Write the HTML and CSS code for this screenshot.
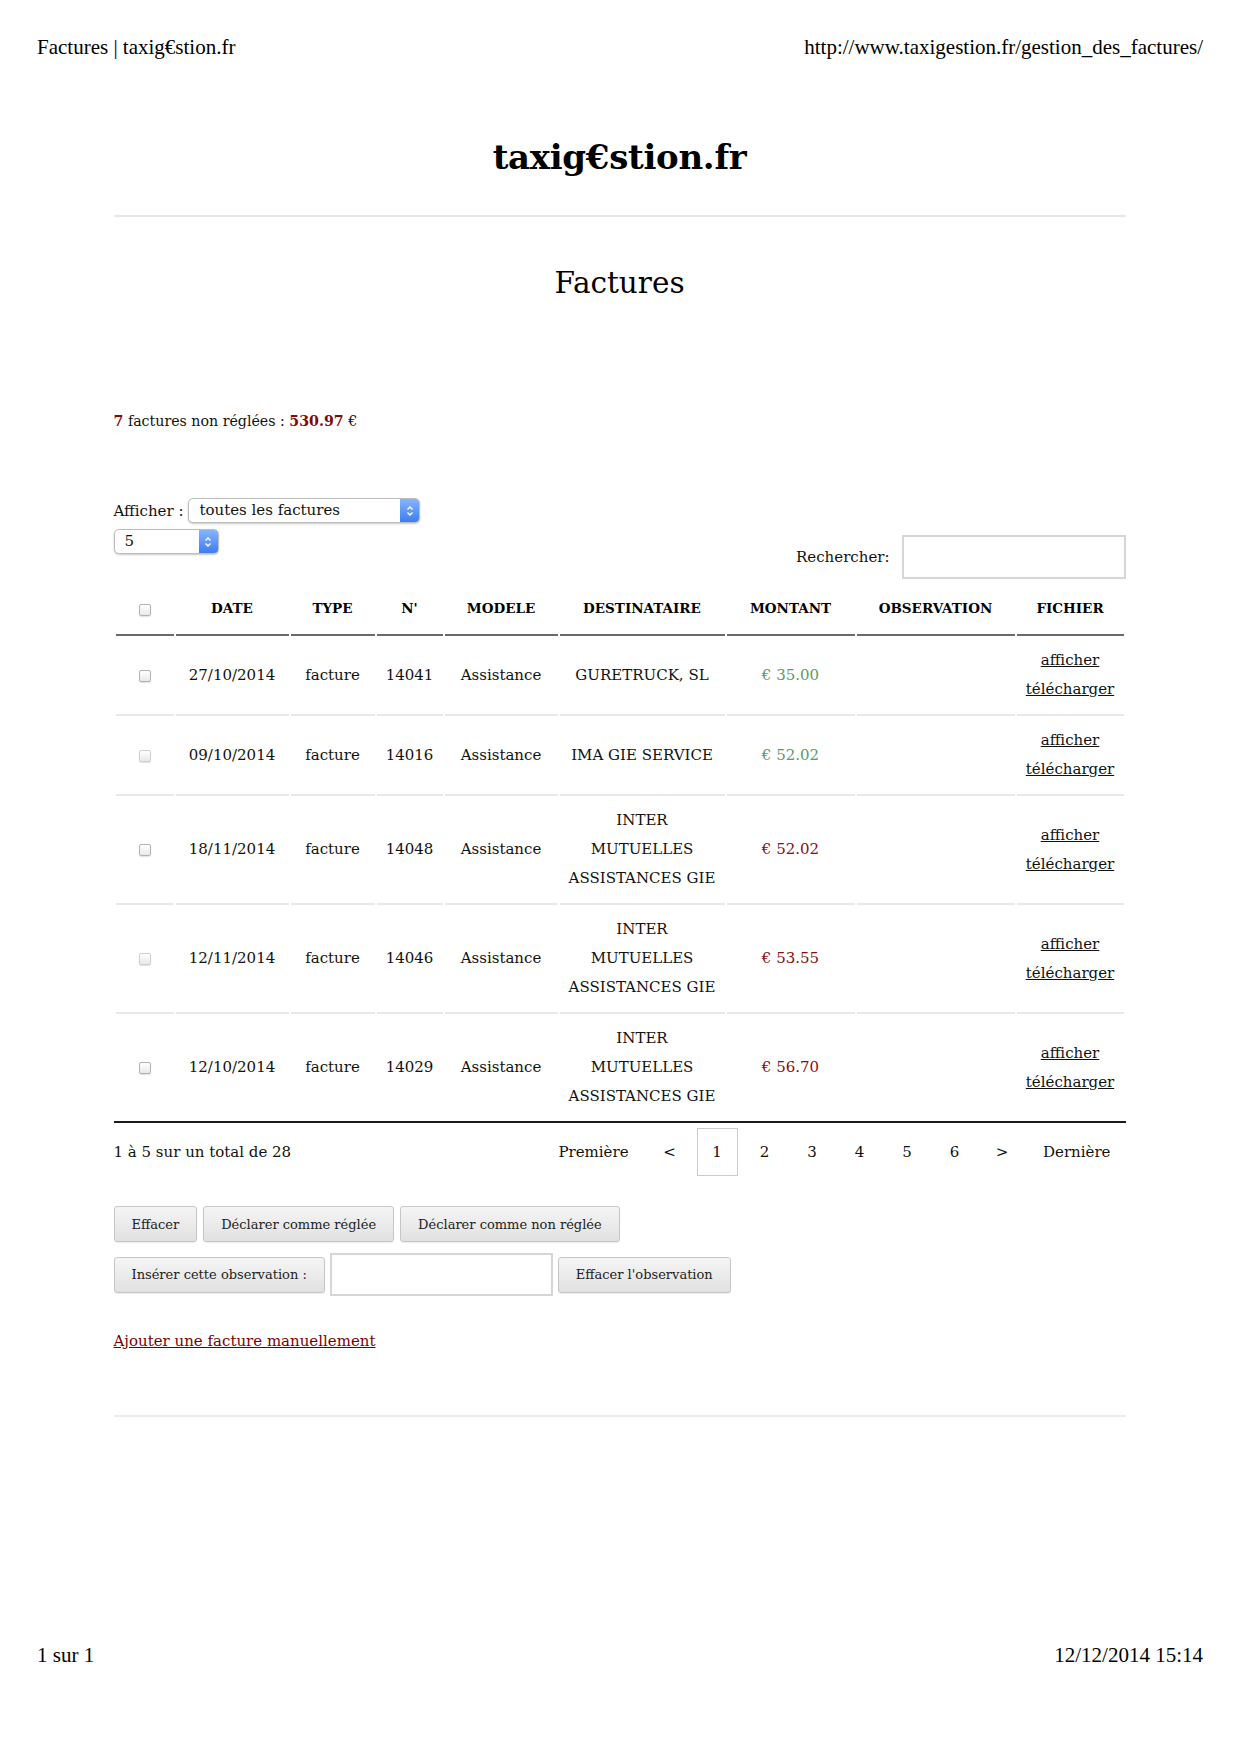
FILE: index.html
```html
<!DOCTYPE html>
<html lang="fr">
<head>
<meta charset="utf-8">
<title>Factures | taxig€stion.fr</title>
<link rel="stylesheet" href="styles.css">
</head>
<body>
<header class="print-head">
  <span>Factures | taxig€stion.fr</span>
  <span>http://www.taxigestion.fr/gestion_des_factures/</span>
</header>

<main class="page">
  <div class="logo">taxig€stion.fr</div>
  <div class="rule"></div>
  <h1 class="title">Factures</h1>

  <p class="summary"><b>7</b> factures non réglées : <b>530.97</b> €</p>

  <div class="filter">
    <span>Afficher :</span>
    <div class="select select-wide">
      <span class="select-value">toutes les factures</span>
      <span class="select-arrows"><svg width="10" height="16" viewBox="0 0 10 16"><path d="M2.5 6.5L5 4l2.5 2.5M2.5 9.5L5 12l2.5-2.5" fill="none" stroke="#fff" stroke-width="1.4"/></svg></span>
    </div>
  </div>

  <div class="dt-top">
    <div class="select select-small">
      <span class="select-value">5</span>
      <span class="select-arrows"><svg width="10" height="16" viewBox="0 0 10 16"><path d="M2.5 6.5L5 4l2.5 2.5M2.5 9.5L5 12l2.5-2.5" fill="none" stroke="#fff" stroke-width="1.4"/></svg></span>
    </div>
    <label class="search">Rechercher: <input type="text" class="search-input"></label>
  </div>

  <table class="invoices">
    <colgroup>
      <col class="c-check"><col class="c-date"><col class="c-type"><col class="c-num"><col class="c-model"><col class="c-dest"><col class="c-amount"><col class="c-obs"><col class="c-file">
    </colgroup>
    <thead>
      <tr>
        <th><span class="cb"></span></th>
        <th>DATE</th>
        <th>TYPE</th>
        <th>N'</th>
        <th>MODELE</th>
        <th>DESTINATAIRE</th>
        <th>MONTANT</th>
        <th>OBSERVATION</th>
        <th>FICHIER</th>
      </tr>
    </thead>
    <tbody>
      <tr>
        <td><span class="cb"></span></td>
        <td>27/10/2014</td>
        <td>facture</td>
        <td>14041</td>
        <td>Assistance</td>
        <td>GURETRUCK, SL</td>
        <td class="paid">€ 35.00</td>
        <td></td>
        <td><a href="#" class="file-link">afficher</a><br><a href="#" class="file-link">télécharger</a></td>
      </tr>
      <tr>
        <td><span class="cb cb-light"></span></td>
        <td>09/10/2014</td>
        <td>facture</td>
        <td>14016</td>
        <td>Assistance</td>
        <td>IMA GIE SERVICE</td>
        <td class="paid">€ 52.02</td>
        <td></td>
        <td><a href="#" class="file-link">afficher</a><br><a href="#" class="file-link">télécharger</a></td>
      </tr>
      <tr>
        <td><span class="cb"></span></td>
        <td>18/11/2014</td>
        <td>facture</td>
        <td>14048</td>
        <td>Assistance</td>
        <td>INTER<br>MUTUELLES<br>ASSISTANCES GIE</td>
        <td class="unpaid">€ 52.02</td>
        <td></td>
        <td><a href="#" class="file-link">afficher</a><br><a href="#" class="file-link">télécharger</a></td>
      </tr>
      <tr>
        <td><span class="cb cb-light"></span></td>
        <td>12/11/2014</td>
        <td>facture</td>
        <td>14046</td>
        <td>Assistance</td>
        <td>INTER<br>MUTUELLES<br>ASSISTANCES GIE</td>
        <td class="unpaid">€ 53.55</td>
        <td></td>
        <td><a href="#" class="file-link">afficher</a><br><a href="#" class="file-link">télécharger</a></td>
      </tr>
      <tr>
        <td><span class="cb"></span></td>
        <td>12/10/2014</td>
        <td>facture</td>
        <td>14029</td>
        <td>Assistance</td>
        <td>INTER<br>MUTUELLES<br>ASSISTANCES GIE</td>
        <td class="unpaid">€ 56.70</td>
        <td></td>
        <td><a href="#" class="file-link">afficher</a><br><a href="#" class="file-link">télécharger</a></td>
      </tr>
    </tbody>
  </table>

  <div class="dt-bottom">
    <div class="info">1 à 5 sur un total de 28</div>
    <nav class="pager">
      <span class="pg">Première</span>
      <span class="pg">&lt;</span>
      <span class="pg pg-current">1</span>
      <span class="pg">2</span>
      <span class="pg">3</span>
      <span class="pg">4</span>
      <span class="pg">5</span>
      <span class="pg">6</span>
      <span class="pg">&gt;</span>
      <span class="pg">Dernière</span>
    </nav>
  </div>

  <div class="actions">
    <button class="btn">Effacer</button>
    <button class="btn">Déclarer comme réglée</button>
    <button class="btn">Déclarer comme non réglée</button>
  </div>
  <div class="actions actions-obs">
    <button class="btn">Insérer cette observation :</button>
    <input type="text" class="obs-input">
    <button class="btn">Effacer l'observation</button>
  </div>

  <p class="add"><a href="#" class="add-link">Ajouter une facture manuellement</a></p>

  <div class="rule rule-bottom"></div>
</main>

<footer class="print-foot">
  <span>1 sur 1</span>
  <span>12/12/2014 15:14</span>
</footer>
</body>
</html>
```

FILE: styles.css
```css
html, body {
  margin: 0;
  padding: 0;
  background: #fff;
}

body {
  font-family: "DejaVu Serif", "Liberation Serif", serif;
  font-size: 15px;
  color: #111;
}

/* print header / footer */
.print-head,
.print-foot {
  display: flex;
  justify-content: space-between;
  font-family: "Liberation Serif", serif;
  font-size: 21px;
  line-height: 24px;
  color: #000;
  padding: 0 36px 0 37px;
}

.print-head {
  padding-top: 35px;
}

.print-foot {
  margin-top: 226px;
}

/* page content */
.page {
  width: 1012px;
  margin: 0 auto;
}

.logo {
  margin-top: 74px;
  text-align: center;
  font-family: "DejaVu Serif", serif;
  font-weight: bold;
  font-size: 34px;
  line-height: 48px;
  color: #000;
  letter-spacing: -0.3px;
}

.rule {
  margin-top: 34px;
  height: 0;
  border-top: 2px solid #e6e6e6;
}

.title {
  margin: 42px 0 0;
  text-align: center;
  font-weight: normal;
  font-size: 29.5px;
  line-height: 48px;
  color: #000;
}

.summary {
  margin: 104px 0 0;
  font-size: 14.2px;
  line-height: 20px;
}

.summary b {
  color: #7d0b0b;
}

/* filters */
.filter {
  margin-top: 67px;
  display: flex;
  align-items: center;
  gap: 5px;
  height: 25px;
}

.select {
  display: flex;
  box-sizing: border-box;
  height: 25px;
  border: 1px solid #bdbdbd;
  border-radius: 5px;
  background: #fff;
  box-shadow: 0 1px 2px rgba(0, 0, 0, 0.22);
  overflow: hidden;
}

.select-wide {
  width: 232px;
}

.select-small {
  width: 105px;
}

.select-value {
  flex: 1;
  padding-left: 10px;
  line-height: 23px;
  font-size: 15px;
}

.select-arrows {
  width: 19px;
  display: flex;
  align-items: center;
  justify-content: center;
  background: linear-gradient(#86b4ff, #3d7df1);
}

.dt-top {
  margin-top: 6px;
  display: flex;
  justify-content: space-between;
  align-items: flex-start;
}

.search {
  margin-top: 6px;
  display: flex;
  align-items: center;
  gap: 12px;
  font-size: 15px;
}

.search-input {
  box-sizing: border-box;
  width: 224px;
  height: 44px;
  margin: 0;
  border: 2px solid #d6d6d6;
  background: #fff;
  outline: none;
}

/* table */
.invoices {
  margin-top: 8px;
  width: 100%;
  table-layout: fixed;
  border-collapse: separate;
  border-spacing: 2px 0;
  border-bottom: 2px solid #1a1a1a;
}

.c-check { width: 58px; }
.c-date { width: 113px; }
.c-type { width: 84px; }
.c-num { width: 66px; }
.c-model { width: 113px; }
.c-dest { width: 165px; }
.c-amount { width: 128px; }
.c-obs { width: 158px; }
.c-file { width: 107px; }

.invoices th {
  padding: 10px 2px 15px;
  line-height: 22px;
  font-size: 13.5px;
  font-weight: bold;
  color: #000;
  text-align: center;
  border-bottom: 2px solid #6b6b6b;
}

.invoices td {
  padding: 10px 2px;
  line-height: 29px;
  text-align: center;
  vertical-align: middle;
  border-bottom: 2px solid #e8e8e8;
}

.invoices tbody tr:last-child td {
  border-bottom: none;
}

.cb {
  display: inline-block;
  box-sizing: border-box;
  width: 12px;
  height: 12px;
  vertical-align: middle;
  border: 1px solid #b3b3b3;
  border-radius: 2px;
  background: linear-gradient(#ffffff, #e9e9e9);
  box-shadow: 0 1px 1px rgba(0, 0, 0, 0.12);
}

.cb-light {
  border-color: #cfcfcf;
}

.paid {
  color: #5c9a60;
}

.unpaid {
  color: #8a0c0c;
}

.file-link {
  color: #111;
  text-decoration: underline;
}

/* bottom of table */
.dt-bottom {
  margin-top: 5px;
  height: 48px;
  display: flex;
  align-items: center;
  justify-content: space-between;
}

.info {
  line-height: 20px;
}

.pager {
  display: flex;
  gap: 6.5px;
  padding-right: 1px;
}

.pg {
  box-sizing: border-box;
  min-width: 41px;
  height: 48px;
  padding: 0 13px;
  line-height: 46px;
  text-align: center;
  border: 1px solid transparent;
}

.pg-current {
  border-color: #cccccc;
}

/* actions */
.actions {
  margin-top: 30px;
  display: flex;
  align-items: center;
  gap: 6px;
}

.actions-obs {
  margin-top: 11px;
  gap: 5px;
}

.btn {
  box-sizing: border-box;
  height: 36px;
  margin: 0;
  padding: 0 17px;
  font-family: "DejaVu Serif", serif;
  font-size: 13px;
  color: #222;
  border: 1px solid #c6c6c6;
  border-radius: 3px;
  background: linear-gradient(#f5f5f5, #e1e1e1);
  box-shadow: 0 1px 1px rgba(0, 0, 0, 0.08);
}

.obs-input {
  box-sizing: border-box;
  width: 223px;
  height: 43px;
  margin: 0;
  border: 2px solid #d6d6d6;
  background: #fff;
  outline: none;
}

.add {
  margin: 35px 0 0;
  line-height: 20px;
}

.add-link {
  color: #7a0000;
  text-decoration: underline;
  text-decoration-color: #222;
}

.rule-bottom {
  margin-top: 64px;
  border-top-color: #ececec;
}
```
